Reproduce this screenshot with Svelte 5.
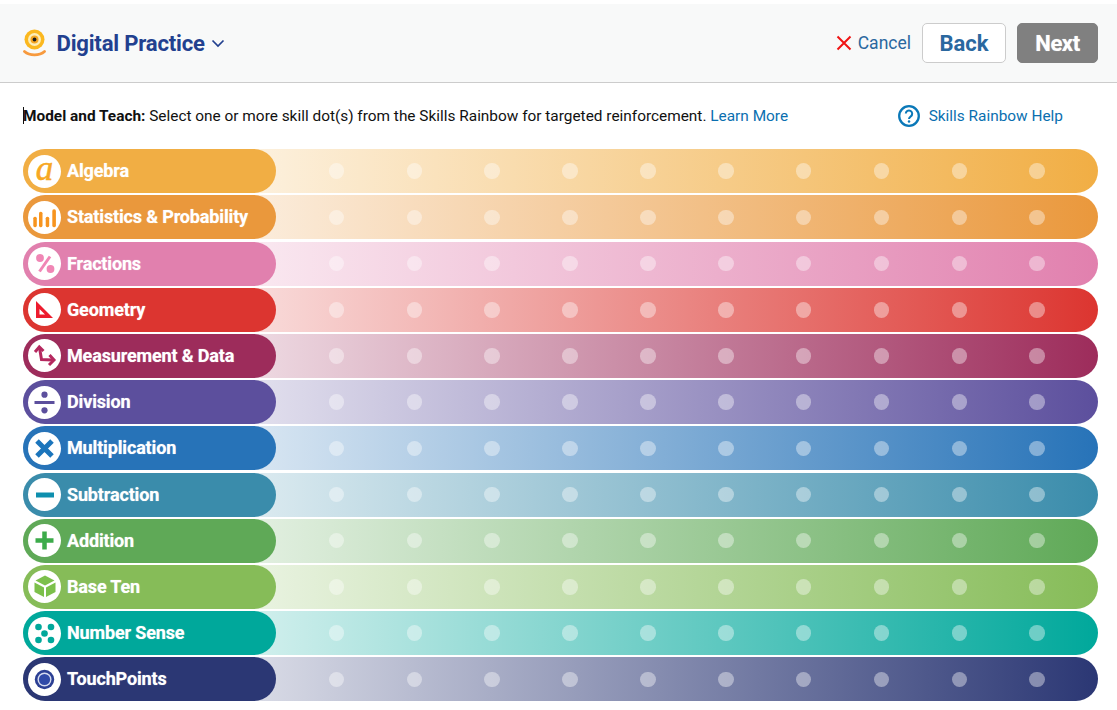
<script>
  const skills = [
    { name: 'Algebra', icon: 'algebra', color: '241, 174, 68' },
    { name: 'Statistics & Probability', icon: 'stats', color: '234, 152, 60' },
    { name: 'Fractions', icon: 'fractions', color: '225, 128, 174' },
    { name: 'Geometry', icon: 'geometry', color: '220, 53, 48' },
    { name: 'Measurement & Data', icon: 'measure', color: '157, 44, 91' },
    { name: 'Division', icon: 'division', color: '92, 79, 157' },
    { name: 'Multiplication', icon: 'times', color: '39, 115, 184' },
    { name: 'Subtraction', icon: 'minus', color: '58, 140, 171' },
    { name: 'Addition', icon: 'plus', color: '95, 169, 87' },
    { name: 'Base Ten', icon: 'cube', color: '134, 188, 88' },
    { name: 'Number Sense', icon: 'dots', color: '0, 168, 155' },
    { name: 'TouchPoints', icon: 'touch', color: '43, 55, 116' }
  ];

  const dots = Array.from({ length: 10 }, (_, i) => i);
</script>

<div class="page">
  <header class="topbar">
    <div class="brand">
      <svg class="logo" width="23" height="28" viewBox="0 0 23 28">
        <circle cx="11.500" cy="10.500" r="10" fill="#fbb81f" />
        <circle cx="11.500" cy="10.500" r="6.500" fill="#fdeeb8" />
        <circle cx="11.500" cy="10.500" r="4" fill="#f5a623" />
        <circle cx="11.500" cy="10.500" r="1.900" fill="#1c1c1c" />
        <path d="M1.500 22.500c5 4.500 15 4.500 20 0" fill="none" stroke="#f79a3e" stroke-width="2.800" stroke-linecap="round" />
      </svg>
      <span class="title">Digital Practice</span>
      <svg width="14" height="9" viewBox="0 0 14 9"><path d="M1.500 1.500 7 7l5.500-5.500" fill="none" stroke="#22408f" stroke-width="1.700" /></svg>
    </div>
    <div class="actions">
      <a class="cancel" href="#cancel">
        <svg width="16" height="16" viewBox="0 0 16 16"><path d="M1.500 1.500l13 13m0-13l-13 13" stroke="#f01414" stroke-width="2" /></svg>
        Cancel
      </a>
      <button class="btn back">Back</button>
      <button class="btn next">Next</button>
    </div>
  </header>

  <div class="intro">
    <p><span class="caret"></span><b>Model and Teach:</b> Select one or more skill dot(s) from the Skills Rainbow for targeted reinforcement. <a href="#learn">Learn More</a></p>
    <a class="help" href="#help">
      <svg width="22" height="22" viewBox="0 0 22 22">
        <circle cx="11" cy="11" r="9.800" fill="none" stroke="#0a78b8" stroke-width="2.300" />
        <path d="M7.800 8.600a3.200 3.200 0 1 1 5 2.700c-1.200.8-1.800 1.300-1.800 2.700" fill="none" stroke="#0a78b8" stroke-width="2" />
        <circle cx="11" cy="16.500" r="1.250" fill="#0a78b8" />
      </svg>
      Skills Rainbow Help
    </a>
  </div>

  <div class="rainbow">
    {#each skills as skill}
      <div class="row" style="--c: {skill.color}">
        <div class="pill">
          <span class="badge">
            {#if skill.icon === 'algebra'}
              <span class="letter">a</span>
            {:else}
              <svg width="33" height="33" viewBox="0 0 33 33">
                {#if skill.icon === 'stats'}
                  <g fill="#f7941e">
                    <rect x="5.300" y="15.700" width="3.500" height="10.500" rx="1.600" />
                    <rect x="11" y="10.700" width="3.500" height="15.500" rx="1.600" />
                    <rect x="17.700" y="15.700" width="3.500" height="10.500" rx="1.600" />
                    <rect x="24.300" y="8.300" width="3.600" height="17.900" rx="1.600" />
                  </g>
                {:else if skill.icon === 'fractions'}
                  <g fill="#f086b5">
                    <circle cx="12" cy="11" r="3.900" />
                    <circle cx="22.500" cy="22" r="3.900" />
                  </g>
                  <path d="M22 9.500 11.500 24.500" stroke="#f086b5" stroke-width="3" />
                {:else if skill.icon === 'geometry'}
                  <path fill="#ed1c2e" fill-rule="evenodd" d="M8 8V25H25ZM11.500 16V21.500H17Z" />
                {:else if skill.icon === 'measure'}
                  <g fill="none" stroke="#b5285f" stroke-width="3">
                    <path d="M11.500 8.500 13.500 20.500 24.500 21" />
                    <path d="M7 13 11.300 8 15.500 12" />
                    <path d="M21.500 16 26 21 21 26" />
                  </g>
                {:else if skill.icon === 'division'}
                  <g fill="#5c4f9d">
                    <circle cx="16.500" cy="8.700" r="3.100" />
                    <circle cx="16.500" cy="24.300" r="3.100" />
                    <rect x="6.500" y="15" width="20" height="3" />
                  </g>
                {:else if skill.icon === 'times'}
                  <path d="M9 9l15 15m0-15L9 24" stroke="#1b75bc" stroke-width="5" />
                {:else if skill.icon === 'minus'}
                  <rect x="8" y="14.500" width="18" height="5" fill="#0e8fae" />
                {:else if skill.icon === 'plus'}
                  <path d="M16.500 7.500v18m-9-9h18" stroke="#3cab4a" stroke-width="4.500" />
                {:else if skill.icon === 'cube'}
                  <g fill="#7cc04b">
                    <path d="M17 5.500 26.500 10.500 17 15.500 7.500 10.500Z" />
                    <path d="M6.500 12.500 16 17.500V27L6.500 22Z" />
                    <path d="M27.500 12.500 18 17.500V27L27.500 22Z" />
                  </g>
                {:else if skill.icon === 'dots'}
                  <g fill="#00a89b">
                    <circle cx="10.500" cy="10" r="3.300" />
                    <circle cx="23" cy="10" r="3.300" />
                    <circle cx="16.500" cy="16.500" r="3.300" />
                    <circle cx="10.500" cy="23" r="3.300" />
                    <circle cx="23" cy="23" r="3.300" />
                  </g>
                {:else if skill.icon === 'touch'}
                  <circle cx="16.500" cy="16.500" r="9.700" fill="#2b3f94" />
                  <circle cx="16.500" cy="16.500" r="7" fill="#d5dbf0" />
                  <circle cx="16.500" cy="16.500" r="5.600" fill="#2f49a8" />
                {/if}
              </svg>
            {/if}
          </span>
          <span class="label">{skill.name}</span>
        </div>
        <div class="dots">
          {#each dots as d (d)}
            <span class="dot"></span>
          {/each}
        </div>
      </div>
    {/each}
  </div>
</div>

<style>
  :global(body) {
    background: #fff;
  }

  .page {
    font-family: Roboto, "Liberation Sans", sans-serif;
    padding-top: 4px;
  }

  .topbar {
    display: flex;
    align-items: center;
    justify-content: space-between;
    height: 78px;
    padding: 0 19px 0 23px;
    background: #f8f9f9;
    border-bottom: 1px solid #cccccc;
  }

  .brand {
    display: flex;
    align-items: center;
  }

  .logo {
    margin-right: 10.500px;
  }

  .title {
    font-size: 22.100px;
    font-weight: 700;
    color: #22408f;
    letter-spacing: -0.2px;
    margin-right: 6.500px;
  }

  .actions {
    display: flex;
    align-items: center;
  }

  .cancel {
    display: flex;
    align-items: center;
    gap: 6px;
    font-size: 17.500px;
    color: #2a689f;
    text-decoration: none;
    margin-right: 11px;
  }

  .btn {
    height: 40px;
    border-radius: 5px;
    font-family: inherit;
    font-size: 22px;
    font-weight: 700;
    padding: 0;
  }

  .back {
    width: 84px;
    background: #fff;
    border: 1px solid #cccccc;
    color: #2a689f;
    margin-right: 11px;
  }

  .next {
    width: 81px;
    background: #808080;
    border: 1px solid #808080;
    color: #fff;
    letter-spacing: -0.4px;
    text-shadow: 0 0 1px rgba(255, 255, 255, 0.6);
  }

  .intro {
    display: flex;
    align-items: center;
    justify-content: space-between;
    height: 66.200px;
    padding: 0 54px 0 23px;
    font-size: 15.400px;
    color: #111;
  }

  .intro p {
    margin: 0;
  }

  .intro a {
    color: #0a6fb0;
    text-decoration: none;
  }

  .caret {
    display: inline-block;
    width: 1px;
    height: 17px;
    margin-right: -1px;
    background: #111;
    vertical-align: -3px;
  }

  .help {
    display: flex;
    align-items: center;
    gap: 9px;
  }

  .rainbow {
    display: flex;
    flex-direction: column;
    gap: 2.200px;
    padding: 0 19px 0 23px;
  }

  .row {
    display: flex;
    align-items: center;
    height: 44px;
    border-radius: 22px;
    background: linear-gradient(90deg, rgba(var(--c), 0.18) 230px, rgb(var(--c)) 100%);
  }

  .pill {
    display: flex;
    align-items: center;
    flex: none;
    width: 253px;
    height: 100%;
    padding-left: 5px;
    box-sizing: border-box;
    border-radius: 22px;
    background: rgb(var(--c));
  }

  .badge {
    display: flex;
    align-items: center;
    justify-content: center;
    flex: none;
    width: 33px;
    height: 33px;
    margin-right: 6px;
    border-radius: 50%;
    background: #fff;
  }

  .letter {
    font-family: "Liberation Serif", serif;
    font-style: italic;
    font-size: 35px;
    line-height: 27px;
    height: 33px;
    color: #f7a823;
    -webkit-text-stroke: 0.5px #f7a823;
  }

  .label {
    font-size: 18px;
    font-weight: 700;
    color: #fff;
    letter-spacing: -0.15px;
    white-space: nowrap;
    text-shadow: 0 0 1px rgba(255, 255, 255, 0.6);
    margin-top: -1px;
  }

  .dots {
    display: flex;
    gap: 62.370px;
    margin-left: 52.750px;
  }

  .dot {
    width: 15.500px;
    height: 15.500px;
    border-radius: 50%;
    background: rgba(255, 255, 255, 0.4);
  }
</style>
